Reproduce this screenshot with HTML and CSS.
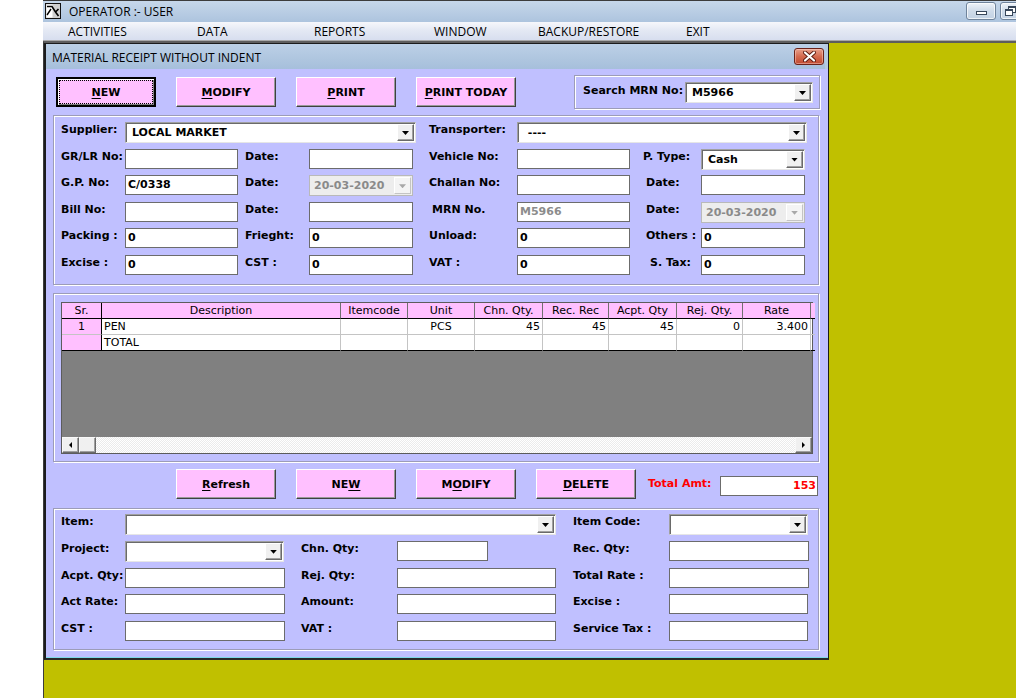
FILE: index.html
```html
<!DOCTYPE html>
<html>
<head>
<meta charset="utf-8">
<title>Material Receipt Without Indent</title>
<link rel="stylesheet" href="styles.css">
</head>
<body>
<div class="screen">
  <div class="gutter"></div>
  <div class="app">
    <header class="titlebar">
      <svg class="appicon" width="16" height="16" viewBox="0 0 16 16">
        <rect x="0.5" y="0.5" width="15" height="15" fill="#cfcfcf" stroke="#111"/>
        <rect x="1.5" y="1.5" width="6" height="13" fill="#fff"/>
        <path d="M2 3.5 H7 L10.5 9 L13.5 6 M10.5 9 L13.5 13" stroke="#000" stroke-width="1.6" fill="none"/>
        <path d="M2 12 L6 6" stroke="#000" stroke-width="1.4"/>
      </svg>
      <span class="apptitle">OPERATOR :- USER</span>
      <div class="capbtns">
        <span class="capbtn cb-min"><i></i></span>
        <span class="capbtn cb-max"><i></i><b></b></span>
        <span class="capbtn cb-close"></span>
      </div>
    </header>
    <nav class="menubar">
      <span>ACTIVITIES</span>
      <span>DATA</span>
      <span>REPORTS</span>
      <span>WINDOW</span>
      <span>BACKUP/RESTORE</span>
      <span>EXIT</span>
    </nav>
    <main class="mdi">
      <section class="child">
        <div class="child-title">
          <span class="ctext">MATERIAL RECEIPT WITHOUT INDENT</span>
          <span class="closebtn">
            <svg width="13" height="11" viewBox="0 0 13 11">
              <path d="M2 1.5 L11 9.5 M11 1.5 L2 9.5" stroke="#5a1a10" stroke-width="4" stroke-linecap="round"/>
              <path d="M2 1.5 L11 9.5 M11 1.5 L2 9.5" stroke="#fff" stroke-width="2.2" stroke-linecap="round"/>
            </svg>
          </span>
        </div>
        <div class="child-body">
          <div class="toolbar">
            <div class="btnrow">
              <div class="btn default"><span class="focus"><u>N</u>EW</span></div>
              <div class="btn"><u>M</u>ODIFY</div>
              <div class="btn"><u>P</u>RINT</div>
              <div class="btn"><u>P</u>RINT TODAY</div>
            </div>
            <div class="searchbox frame">
              <span class="lbl">Search MRN No:</span>
              <div class="cb w128"><span class="val">M5966</span><span class="dd"></span></div>
            </div>
          </div>

          <div class="frame f1">
            <span class="lbl">Supplier:</span>
            <div class="cb span3 w291"><span class="val">LOCAL MARKET</span><span class="dd"></span></div>
            <span class="lbl">Transporter:</span>
            <div class="cb span3 w290"><span class="val">&nbsp;----</span><span class="dd"></span></div>

            <span class="lbl">GR/LR No:</span>
            <div class="tb w113"></div>
            <span class="lbl">Date:</span>
            <div class="tb w104"></div>
            <span class="lbl">Vehicle No:</span>
            <div class="tb w113"></div>
            <span class="lbl ptype">P. Type:</span>
            <div class="cb w104"><span class="val">Cash</span><span class="dd"></span></div>

            <span class="lbl">G.P. No:</span>
            <div class="tb w113">C/0338</div>
            <span class="lbl">Date:</span>
            <div class="cb dis w104"><span class="val">20-03-2020</span><span class="dd"></span></div>
            <span class="lbl">Challan No:</span>
            <div class="tb w113"></div>
            <span class="lbl">Date:</span>
            <div class="tb w104"></div>

            <span class="lbl">Bill No:</span>
            <div class="tb w113"></div>
            <span class="lbl">Date:</span>
            <div class="tb w104"></div>
            <span class="lbl ind3">MRN No.</span>
            <div class="tb w113 grey">M5966</div>
            <span class="lbl">Date:</span>
            <div class="cb dis w104"><span class="val">20-03-2020</span><span class="dd"></span></div>

            <span class="lbl">Packing :</span>
            <div class="tb w113">0</div>
            <span class="lbl">Frieght:</span>
            <div class="tb w104">0</div>
            <span class="lbl">Unload:</span>
            <div class="tb w113">0</div>
            <span class="lbl">Others :</span>
            <div class="tb w104">0</div>

            <span class="lbl">Excise :</span>
            <div class="tb w113">0</div>
            <span class="lbl">CST :</span>
            <div class="tb w104">0</div>
            <span class="lbl">VAT :</span>
            <div class="tb w113">0</div>
            <span class="lbl ind4">S. Tax:</span>
            <div class="tb w104">0</div>
          </div>

          <div class="frame f2">
            <div class="grid">
              <div class="grows">
                <div class="hc fix">Sr.</div>
                <div class="hc">Description</div>
                <div class="hc">Itemcode</div>
                <div class="hc">Unit</div>
                <div class="hc">Chn. Qty.</div>
                <div class="hc">Rec. Rec</div>
                <div class="hc">Acpt. Qty</div>
                <div class="hc">Rej. Qty.</div>
                <div class="hc">Rate</div>
                <div class="hc last"></div>

                <div class="dc fix c">1</div>
                <div class="dc">PEN</div>
                <div class="dc"></div>
                <div class="dc c">PCS</div>
                <div class="dc r">45</div>
                <div class="dc r">45</div>
                <div class="dc r">45</div>
                <div class="dc r">0</div>
                <div class="dc r">3.400</div>
                <div class="dc last"></div>

                <div class="dc fix end"></div>
                <div class="dc end">TOTAL</div>
                <div class="dc end"></div>
                <div class="dc end"></div>
                <div class="dc end"></div>
                <div class="dc end"></div>
                <div class="dc end"></div>
                <div class="dc end"></div>
                <div class="dc end"></div>
                <div class="dc end last"></div>
              </div>
              <div class="gfill"></div>
              <div class="hscroll">
                <span class="sbtn"><i class="arr-l"></i></span>
                <span class="sbtn thumb"></span>
                <span class="track"></span>
                <span class="sbtn"><i class="arr-r"></i></span>
              </div>
            </div>
          </div>

          <div class="actions">
            <div class="btn"><u>R</u>efresh</div>
            <div class="btn">NE<u>W</u></div>
            <div class="btn">M<u>O</u>DIFY</div>
            <div class="btn"><u>D</u>ELETE</div>
            <span class="lbl red totlbl">Total Amt:</span>
            <div class="tb w98 red ralign">153</div>
          </div>

          <div class="frame f3">
            <span class="lbl">Item:</span>
            <div class="cb span3 w431"><span class="val"></span><span class="dd"></span></div>
            <span class="lbl">Item Code:</span>
            <div class="cb w139"><span class="val"></span><span class="dd"></span></div>

            <span class="lbl">Project:</span>
            <div class="cb w159"><span class="val"></span><span class="dd"></span></div>
            <span class="lbl">Chn. Qty:</span>
            <div class="tb w91"></div>
            <span class="lbl">Rec. Qty:</span>
            <div class="tb w140"></div>

            <span class="lbl">Acpt. Qty:</span>
            <div class="tb w160"></div>
            <span class="lbl">Rej. Qty:</span>
            <div class="tb w159"></div>
            <span class="lbl">Total Rate :</span>
            <div class="tb w140"></div>

            <span class="lbl">Act Rate:</span>
            <div class="tb w160"></div>
            <span class="lbl">Amount:</span>
            <div class="tb w159"></div>
            <span class="lbl">Excise :</span>
            <div class="tb w139"></div>

            <span class="lbl">CST :</span>
            <div class="tb w160"></div>
            <span class="lbl">VAT :</span>
            <div class="tb w159"></div>
            <span class="lbl">Service Tax :</span>
            <div class="tb w139"></div>
          </div>
        </div>
      </section>
    </main>
  </div>
</div>
</body>
</html>
```

FILE: styles.css
```css
* { box-sizing: border-box; }
html, body { margin: 0; padding: 0; }
body {
  width: 1016px;
  height: 698px;
  overflow: hidden;
  background: #fff;
  font-family: "DejaVu Sans", sans-serif;
  font-size: 11px;
  color: #000;
}
.screen { display: flex; height: 698px; }
.gutter { width: 43px; flex-shrink: 0; background: #fff; }
.app { flex: 1; min-width: 0; display: flex; flex-direction: column; }

/* main title bar */
.titlebar {
  height: 22px;
  flex-shrink: 0;
  display: flex;
  align-items: center;
  overflow: hidden;
  border-top: 1px solid #3c3c3c;
  padding-bottom: 1px;
  background: linear-gradient(#c6d7ea, #adc4de);
  font-family: "Open Sans", sans-serif;
  font-size: 12px;
}
.appicon { margin-left: 2px; flex-shrink: 0; }
.apptitle { margin-left: 8px; }
.capbtns {
  margin-left: auto;
  margin-right: -62px;
  display: flex;
  gap: 4px;
  align-self: flex-start;
  margin-top: 1px;
  flex-shrink: 0;
}
.capbtn {
  height: 18px;
  border: 1px solid #6f839b;
  border-radius: 3px;
  background: linear-gradient(#eef3f9, #cfdbe9 50%, #c3d2e4);
  box-shadow: inset 0 0 0 1px rgba(255,255,255,0.7);
  display: flex;
  align-items: flex-end;
  justify-content: center;
  position: relative;
}
.cb-min { width: 30px; padding-bottom: 4px; }
.cb-min i { width: 11px; height: 4px; background: #fff; border: 1px solid #38475a; }
.cb-max { width: 27px; }
.cb-max i {
  position: absolute; left: 7px; top: 3px;
  width: 8px; height: 7px; border: 1px solid #38475a; border-top-width: 2px; background: #fff;
}
.cb-max b {
  position: absolute; left: 4px; top: 6px;
  width: 8px; height: 7px; border: 1px solid #38475a; border-top-width: 2px; background: #fff;
}
.cb-close { width: 47px; background: linear-gradient(#e8a493, #c75050); border-color: #7a2b20; }

/* menu bar */
.menubar {
  height: 19px;
  flex-shrink: 0;
  display: grid;
  grid-template-columns: 129px 117px 120px 104px 148px auto;
  padding-left: 25px;
  padding-top: 1px;
  align-items: center;
  background: linear-gradient(#f6f7fb, #e4e9f4 45%, #d7deef);
  border-bottom: 1px solid #a9a9a9;
  font-family: "Open Sans", sans-serif;
  font-size: 12px;
  line-height: 17px;
}

/* MDI client area */
.mdi {
  flex: 1;
  position: relative;
  background: #c0c000;
  border-top: 2px solid #5e5e5e;
  border-left: 1px solid #3c3c3c;
}
.child {
  position: absolute;
  left: 0;
  top: 0;
  width: 785px;
  height: 617px;
  display: flex;
  flex-direction: column;
  background: #c0c0ff;
  border: 1px solid #1c1c1c;
  border-left-width: 2px;
  border-bottom: 2px solid #2a2a2a;
  box-shadow: inset 0 -1px 0 #7fd8e8;
}
.child-title {
  height: 25px;
  flex-shrink: 0;
  display: flex;
  align-items: center;
  padding-left: 6px;
  background: linear-gradient(#bcd0e6, #a6bfdb);
  font-family: "Open Sans", sans-serif;
  font-size: 12px;
  border-right: 3px solid #b6cbe3;
}
.ctext { padding-top: 1px; }
.closebtn {
  margin-left: auto;
  margin-right: 1px;
  width: 30px;
  height: 17px;
  border: 1px solid #6b2218;
  border-radius: 3px;
  background: linear-gradient(#e7a08b, #d46a4f 50%, #c04a30);
  box-shadow: inset 0 0 0 1px rgba(255,220,210,0.45);
  display: flex;
  align-items: center;
  justify-content: center;
}
.child-body {
  flex: 1;
  padding: 6px 8px 0 7px;
  display: flex;
  flex-direction: column;
}

/* buttons */
.toolbar { display: flex; height: 34px; align-items: flex-start; }
.btnrow { display: flex; gap: 20px; margin-left: 3px; margin-top: 2px; }
.btn {
  width: 100px;
  height: 30px;
  display: flex;
  align-items: center;
  justify-content: center;
  background: #ffc0ff;
  border: 1px solid;
  border-color: #fff #404040 #404040 #fff;
  box-shadow: inset -1px -1px 0 #9a9a9a;
  font-weight: bold;
  font-size: 11px;
}
.btn u { text-underline-offset: 2px; }
.btn.default {
  border: 2px solid #000;
  box-shadow: inset 1px 1px 0 #fff, inset -1px -1px 0 #808080;
}
.focus {
  width: 92px;
  height: 22px;
  display: flex;
  align-items: center;
  justify-content: center;
  outline: 1px dotted #000;
}

/* frames (group boxes) */
.frame {
  border: 1px solid #9c9cb8;
  box-shadow: inset 1px 1px 0 #fff, 1px 1px 0 #fff;
}
.searchbox {
  margin-left: auto;
  width: 246px;
  height: 34px;
  display: flex;
  align-items: flex-start;
  padding: 6px 0 0 8px;
}
.searchbox .lbl { width: 102px; padding-top: 2px; }

.lbl {
  font-weight: bold;
  line-height: 13px;
  padding-top: 1px;
  white-space: nowrap;
}
.ind3 { padding-left: 3px; }
.ind4 { padding-left: 4px; }
.ptype { margin-left: -3px; }
.red { color: #f00; }

.f1 {
  margin-top: 6px;
  width: 766px;
  height: 170px;
  display: grid;
  grid-template-columns: 64px 120px 64px 120px 88px 129px 55px 104px;
  grid-auto-rows: 20px;
  row-gap: 6.6px;
  align-items: start;
  padding: 6px 0 0 7px;
}
.span3 { grid-column: span 3; }

.tb {
  height: 20px;
  background: #fff;
  border: 1px solid #6c6c6c;
  font-weight: bold;
  line-height: 18px;
  padding-left: 2px;
  white-space: nowrap;
}
.tb.grey { color: #8c8c8c; }
.tb.ralign { text-align: right; padding-right: 1px; }

.cb {
  height: 21px;
  display: flex;
  background: #fff;
  border: 1px solid;
  border-color: #a0a0a0 #e6e6e6 #e6e6e6 #a0a0a0;
  box-shadow: inset 1px 1px 0 #6a6a6a;
}
.cb .val {
  flex: 1;
  padding-left: 6px;
  font-weight: bold;
  line-height: 20px;
  white-space: nowrap;
}
.dd {
  width: 17px;
  height: 17px;
  margin: 1px 1px 0 0;
  display: flex;
  align-items: center;
  justify-content: center;
  background: #f0f0f0;
  border: 1px solid;
  border-color: #fff #6a6a6a #6a6a6a #fff;
  box-shadow: inset -1px -1px 0 #a0a0a0;
}
.dd::after {
  content: "";
  width: 7px;
  height: 4px;
  margin-top: 1px;
  background: #000;
  clip-path: polygon(0 0, 100% 0, 50% 100%);
}
.cb.dis {
  background: #ededed;
  border-color: #b9b9b9;
  box-shadow: none;
}
.cb.dis .val { color: #8a8a8a; padding-left: 4px; }
.cb.dis .dd { background: #f4f4f4; border-color: #fff #c4c4c4 #c4c4c4 #fff; box-shadow: none; }
.cb.dis .dd::after { background: #a8a8a8; }

.w91 { width: 91px; } .w98 { width: 98px; } .w104 { width: 104px; } .w113 { width: 113px; }
.w128 { width: 128px; } .w139 { width: 139px; } .w140 { width: 140px; } .w159 { width: 159px; }
.w160 { width: 160px; } .w290 { width: 290px; } .w291 { width: 291px; } .w431 { width: 431px; }

/* grid frame */
.f2 {
  margin-top: 8px;
  width: 766px;
  height: 169px;
  padding: 8px 0 0 7px;
}
.grid {
  width: 752px;
  height: 152px;
  border: 1px solid #5c5c5c;
  display: flex;
  flex-direction: column;
  background: #808080;
}
.grows {
  display: grid;
  grid-template-columns: 40px 239px 67px 67px 68px 66px 68px 66px 68px 1fr;
  grid-auto-rows: 16px;
  background: #fff;
  font-size: 11px;
}
.hc {
  background: #ffc0ff;
  border-right: 1px solid #707070;
  border-bottom: 1px solid #000;
  text-align: center;
  line-height: 15px;
  white-space: nowrap;
  overflow: hidden;
}
.dc {
  border-right: 1px solid #c4c4c4;
  border-bottom: 1px solid #c4c4c4;
  line-height: 15px;
  padding: 0 2px;
  white-space: nowrap;
  overflow: hidden;
}
.dc.fix { background: #ffc0ff; border-right-color: #000; }
.hc.fix { border-right-color: #000; }
.dc.end { border-bottom-color: #000; }
.dc.c { text-align: center; }
.dc.r { text-align: right; }
.hc.last, .dc.last { border-right: none; }
.gfill { flex: 1; }
.hscroll {
  height: 16px;
  display: flex;
  background: repeating-conic-gradient(#ffffff 0 25%, #ebebeb 0 50%) 0 0 / 2px 2px;
}
.sbtn {
  width: 17px;
  height: 16px;
  flex-shrink: 0;
  display: flex;
  align-items: center;
  justify-content: center;
  background: #f0f0f0;
  border: 1px solid;
  border-color: #f8f8f8 #6a6a6a #6a6a6a #f8f8f8;
  box-shadow: inset -1px -1px 0 #a0a0a0;
}
.sbtn.thumb { width: 17px; }
.track { flex: 1; }
.arr-l, .arr-r { width: 3px; height: 6px; background: #000; }
.arr-l { clip-path: polygon(100% 0, 100% 100%, 0 50%); }
.arr-r { clip-path: polygon(0 0, 0 100%, 100% 50%); }

/* action row */
.actions {
  margin-top: 7px;
  height: 30px;
  display: flex;
  align-items: center;
  gap: 20px;
  padding-left: 123px;
}
.totlbl { margin-left: -8px; width: 72px; padding-top: 0; margin-top: -2px; }
.actions .tb { margin-left: -20px; margin-top: 3px; }

/* bottom frame */
.f3 {
  margin-top: 9px;
  width: 766px;
  height: 142px;
  display: grid;
  grid-template-columns: 64px 176px 96px 176px 96px 140px;
  grid-auto-rows: 20px;
  row-gap: 6.75px;
  align-items: start;
  padding: 5px 0 0 7px;
}
```
